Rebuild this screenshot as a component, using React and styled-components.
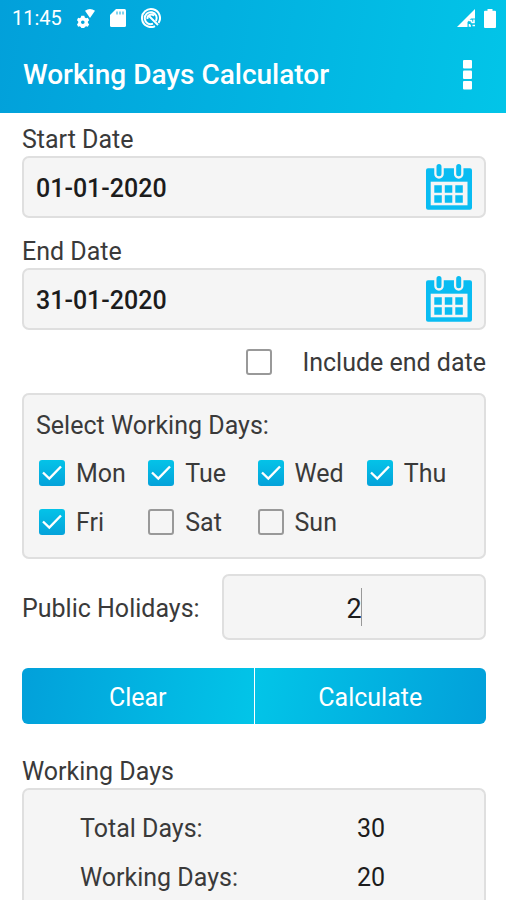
import { useState } from "react";
import styled, { createGlobalStyle } from "styled-components";

const GlobalStyle = createGlobalStyle`
  * {
    box-sizing: border-box;
  }

  body {
    margin: 0;
    background: #fff;
    color: #3a3a3a;
    font-family: Roboto, "Liberation Sans", sans-serif;
    font-size: 25px;
    line-height: 32px;
  }

  input,
  button {
    font-family: inherit;
    font-size: inherit;
    line-height: inherit;
  }
`;

const Page = styled.div`
  height: 100vh;
  display: flex;
  flex-direction: column;
  overflow: hidden;
`;

const Header = styled.header`
  flex: none;
  background: linear-gradient(100deg, #02a0da, #02c5e8);
  color: #fff;
`;

const StatusBar = styled.div`
  display: flex;
  align-items: center;
  justify-content: space-between;
  height: 36px;
  padding: 0 10px 0 12px;
  font-size: 20px;
`;

const StatusGroup = styled.div`
  display: flex;
  align-items: center;
  gap: ${(props) => props.$gap}px;

  svg {
    display: block;
  }
`;

const AppBar = styled.div`
  display: flex;
  align-items: center;
  justify-content: space-between;
  height: 77px;
  padding: 0 23px;
`;

const Title = styled.h1`
  margin: 0;
  font-size: 28px;
  font-weight: 500;
`;

const IconButton = styled.button`
  display: flex;
  align-items: center;
  justify-content: center;
  padding: 0;
  border: 0;
  background: none;
  color: inherit;
  cursor: pointer;
`;

const MenuButton = styled(IconButton)`
  width: 32px;
  height: 40px;
`;

const Content = styled.main`
  flex: 1;
  display: flex;
  flex-direction: column;
  padding: 11px 20px 0 22px;
`;

const Label = styled.label`
  display: block;
`;

const DateGroup = styled.div`
  & + & {
    margin-top: 18px;
  }
`;

const DateBox = styled.div`
  display: flex;
  align-items: center;
  height: 62px;
  padding: 0 12px;
  border: 2px solid #dfdfdf;
  border-radius: 7px;
  background: #f5f5f5;
`;

const DateInput = styled.input`
  flex: 1;
  min-width: 0;
  padding: 3px 0 0;
  border: 0;
  outline: 0;
  background: none;
  color: #1c1c1c;
  font-weight: 500;
`;

const CheckLabel = styled.label`
  display: flex;
  align-items: center;
  gap: ${(props) => props.$gap || 11}px;
  cursor: pointer;
`;

const CheckText = styled.span`
  padding-top: 3px;
`;

const CheckWrap = styled.span`
  display: grid;
  width: 26px;
  height: 26px;

  > * {
    grid-area: 1 / 1;
  }

  svg {
    pointer-events: none;
  }
`;

const CheckInput = styled.input`
  appearance: none;
  width: 26px;
  height: 26px;
  margin: 0;
  border: 2px solid #999;
  border-radius: 3px;

  &:checked {
    border: 0;
    background: linear-gradient(#04c3e8, #04a2da);
  }
`;

const EndDateRow = styled.div`
  display: flex;
  justify-content: flex-end;
  height: 63px;
`;

const DaysBox = styled.fieldset`
  min-width: 0;
  margin: 0;
  padding: 15px 8px 11px 12px;
  border: 2px solid #dfdfdf;
  border-radius: 7px;
  background: #f5f5f5;
`;

const DaysTitle = styled.legend`
  float: left;
  width: 100%;
  margin-bottom: 6px;
  padding: 0;
`;

const DaysGrid = styled.div`
  clear: both;
  display: grid;
  grid-template-columns: repeat(4, 1fr);
  grid-auto-rows: 49px;
  padding-left: 3px;
`;

const HolidayRow = styled.div`
  display: grid;
  grid-template-columns: 200px 1fr;
  align-items: center;
  margin-top: 15px;
`;

const HolidayLabel = styled(Label)`
  padding-top: 4px;
`;

const NumberWrap = styled.div`
  position: relative;
`;

const NumberInput = styled.input`
  display: block;
  width: 100%;
  height: 66px;
  padding: 3px 0 0;
  border: 2px solid #dfdfdf;
  border-radius: 7px;
  outline: 0;
  background: #f5f5f5;
  color: #1c1c1c;
  font-size: 27px;
  text-align: center;
  caret-color: transparent;
`;

const Caret = styled.span`
  position: absolute;
  top: 14px;
  left: 50%;
  width: 1px;
  height: 38px;
  margin-left: 7px;
  background: #999;
`;

const Actions = styled.div`
  display: grid;
  grid-template-columns: 1fr 1fr;
  gap: 1px;
  flex: none;
  margin: 28px 0 32px;
  border-radius: 6px;
  overflow: hidden;
`;

const ActionButton = styled.button`
  height: 56px;
  padding: 4px 0 0;
  border: 0;
  background: linear-gradient(${(props) => props.$angle}deg, #02a0da, #02c5e8);
  color: #fff;
  cursor: pointer;
`;

const SectionTitle = styled.h2`
  margin: 0;
  font-size: 25px;
  font-weight: 400;
`;

const ResultBox = styled.div`
  flex: 1;
  padding: 14px 0;
  border: 2px solid #dfdfdf;
  border-bottom: 0;
  border-radius: 7px 7px 0 0;
  background: #f5f5f5;
`;

const ResultTable = styled.table`
  width: 100%;
  table-layout: fixed;
  border-collapse: collapse;

  th,
  td {
    height: 49px;
    padding: 0;
    font-weight: 400;
    text-align: center;
  }

  th {
    padding-left: 56px;
    text-align: left;
  }

  td {
    padding-left: 4px;
    color: #1c1c1c;
  }
`;

const SettingsIcon = () => (
  <svg width="18" height="20" viewBox="0 0 18 20" fill="#fff">
    <path
      fillRule="evenodd"
      d="M4.3 7.8h3l.5 1.8 1.3.7 1.7-.5 1.4 2.5-1.3 1.3v1.4l1.3 1.3-1.4 2.4-1.7-.5-1.3.7-.5 1.1h-3l-.5-1.1-1.2-.7-1.5.5L0 16.300l1.200-1.300v-1.400L0 12.300l1.100-2.500 1.500.5 1.200-.7zM5.800 12.500a1.800 1.800 0 1 0 0 3.600 1.800 1.800 0 0 0 0-3.600z"
    />
    <path d="M8 2.800Q13-.8 18 2.800L13 10z" />
  </svg>
);

const SdCardIcon = () => (
  <svg width="16" height="18" viewBox="0 0 16 18">
    <path
      d="M6 0h8.500Q16 0 16 1.500v15q0 1.500-1.500 1.500h-13Q0 18 0 16.500V6z"
      fill="#fff"
    />
    <path d="M7 2.500v3M10 2.500v3M13 2.500v3" stroke="#04a9dd" />
  </svg>
);

const SyncIcon = () => (
  <svg width="20" height="20" viewBox="0 0 20 20" fill="none" stroke="#fff">
    <path d="M17.500 15A9 9 0 1 0 14 18.100" strokeWidth="2" />
    <path
      d="M15 13A6 6 0 1 0 12 15.700M6.500 11a3.800 3.800 0 0 1 6.500-3.200M8.500 8.500l8.500 8.500"
      strokeWidth="2"
    />
  </svg>
);

const SignalIcon = () => (
  <svg width="18" height="18" viewBox="0 0 18 18">
    <path d="M0 18L18 0v9.500h-4L10.500 13v5z" fill="#fff" />
    <path
      d="M11.800 11.500h2.700v2M17 10.500v3h-2.500M12.500 15v2h1.500M15.500 16.500H18"
      fill="none"
      stroke="#fff"
      strokeWidth="1.600"
    />
  </svg>
);

const BatteryIcon = () => (
  <svg width="12" height="19" viewBox="0 0 12 19" fill="#fff">
    <path d="M3.500 0h5v1.800H11q1 0 1 1V18q0 1-1 1H1q-1 0-1-1V2.800q0-1 1-1h2.500z" />
  </svg>
);

const MoreIcon = () => (
  <svg width="9" height="30" viewBox="0 0 9 30" fill="#fff">
    <rect width="9" height="8.500" rx="1" />
    <rect y="10.500" width="9" height="8.500" rx="1" />
    <rect y="21" width="9" height="8.500" rx="1" />
  </svg>
);

const CalendarIcon = () => (
  <svg width="46" height="46" viewBox="0 0 46 46">
    <rect y="4.300" width="46" height="41.500" rx="2" fill="#09bcf2" />
    <path
      d="M13 4v6M32.700 4v6"
      stroke="#f5f5f5"
      strokeWidth="9.500"
      strokeLinecap="round"
    />
    <path
      d="M13 2.500v7.300M32.700 2.500v7.300"
      stroke="#09bcf2"
      strokeWidth="5"
      strokeLinecap="round"
    />
    <rect x="4.700" y="17.700" width="36.800" height="23.600" fill="#f5f5f5" />
    <path
      d="M8.300 21.300h7.500v7.500H8.300zM18.800 21.300h7.500v7.500h-7.500zM29.300 21.300h7.500v7.500h-7.500zM8.300 31.300h7.500v7.500H8.300zM18.800 31.300h7.500v7.500h-7.500zM29.300 31.300h7.500v7.500h-7.500z"
      fill="#09bcf2"
    />
  </svg>
);

const CheckBox = ({ label, gap, checked, onChange }) => (
  <CheckLabel $gap={gap}>
    <CheckWrap>
      <CheckInput type="checkbox" checked={checked} onChange={onChange} />
      {checked && (
        <svg width="26" height="26" viewBox="0 0 26 26" fill="none">
          <path d="M4 12.500L10.300 18.500L22 6.500" stroke="#fff" strokeWidth="2.400" />
        </svg>
      )}
    </CheckWrap>
    <CheckText>{label}</CheckText>
  </CheckLabel>
);

const DateField = ({ id, label, value, onChange }) => (
  <DateGroup>
    <Label htmlFor={id}>{label}</Label>
    <DateBox>
      <DateInput
        id={id}
        value={value}
        onChange={(e) => onChange(e.target.value)}
      />
      <IconButton type="button" aria-label={`Pick ${label}`}>
        <CalendarIcon />
      </IconButton>
    </DateBox>
  </DateGroup>
);

const DAYS = ["Mon", "Tue", "Wed", "Thu", "Fri", "Sat", "Sun"];

const RESULTS = [
  { label: "Total Days:", value: 30 },
  { label: "Working Days:", value: 20 },
];

function App() {
  const [startDate, setStartDate] = useState("01-01-2020");
  const [endDate, setEndDate] = useState("31-01-2020");
  const [includeEnd, setIncludeEnd] = useState(false);
  const [workingDays, setWorkingDays] = useState(DAYS.slice(0, 5));
  const [holidays, setHolidays] = useState("2");

  const toggleDay = (day) => {
    setWorkingDays((days) =>
      days.includes(day) ? days.filter((d) => d !== day) : [...days, day]
    );
  };

  const handleClear = () => {
    setStartDate("");
    setEndDate("");
    setHolidays("");
  };

  return (
    <>
      <GlobalStyle />
      <Page>
        <Header>
          <StatusBar>
            <StatusGroup $gap={15}>
              <span>11:45</span>
              <SettingsIcon />
              <SdCardIcon />
              <SyncIcon />
            </StatusGroup>
            <StatusGroup $gap={9}>
              <SignalIcon />
              <BatteryIcon />
            </StatusGroup>
          </StatusBar>
          <AppBar>
            <Title>Working Days Calculator</Title>
            <MenuButton type="button" aria-label="More options">
              <MoreIcon />
            </MenuButton>
          </AppBar>
        </Header>

        <Content>
          <DateField
            id="start"
            label="Start Date"
            value={startDate}
            onChange={setStartDate}
          />
          <DateField
            id="end"
            label="End Date"
            value={endDate}
            onChange={setEndDate}
          />

          <EndDateRow>
            <CheckBox
              label="Include end date"
              gap={30}
              checked={includeEnd}
              onChange={() => setIncludeEnd(!includeEnd)}
            />
          </EndDateRow>

          <DaysBox>
            <DaysTitle>Select Working Days:</DaysTitle>
            <DaysGrid>
              {DAYS.map((day) => (
                <CheckBox
                  key={day}
                  label={day}
                  checked={workingDays.includes(day)}
                  onChange={() => toggleDay(day)}
                />
              ))}
            </DaysGrid>
          </DaysBox>

          <HolidayRow>
            <HolidayLabel htmlFor="holidays">Public Holidays:</HolidayLabel>
            <NumberWrap>
              <NumberInput
                id="holidays"
                inputMode="numeric"
                value={holidays}
                onChange={(e) => setHolidays(e.target.value)}
              />
              <Caret />
            </NumberWrap>
          </HolidayRow>

          <Actions>
            <ActionButton type="button" $angle={100} onClick={handleClear}>
              Clear
            </ActionButton>
            <ActionButton type="button" $angle={-80}>
              Calculate
            </ActionButton>
          </Actions>

          <SectionTitle>Working Days</SectionTitle>
          <ResultBox>
            <ResultTable>
              <tbody>
                {RESULTS.map((row) => (
                  <tr key={row.label}>
                    <th scope="row">{row.label}</th>
                    <td>{row.value}</td>
                  </tr>
                ))}
              </tbody>
            </ResultTable>
          </ResultBox>
        </Content>
      </Page>
    </>
  );
}

export default App;
